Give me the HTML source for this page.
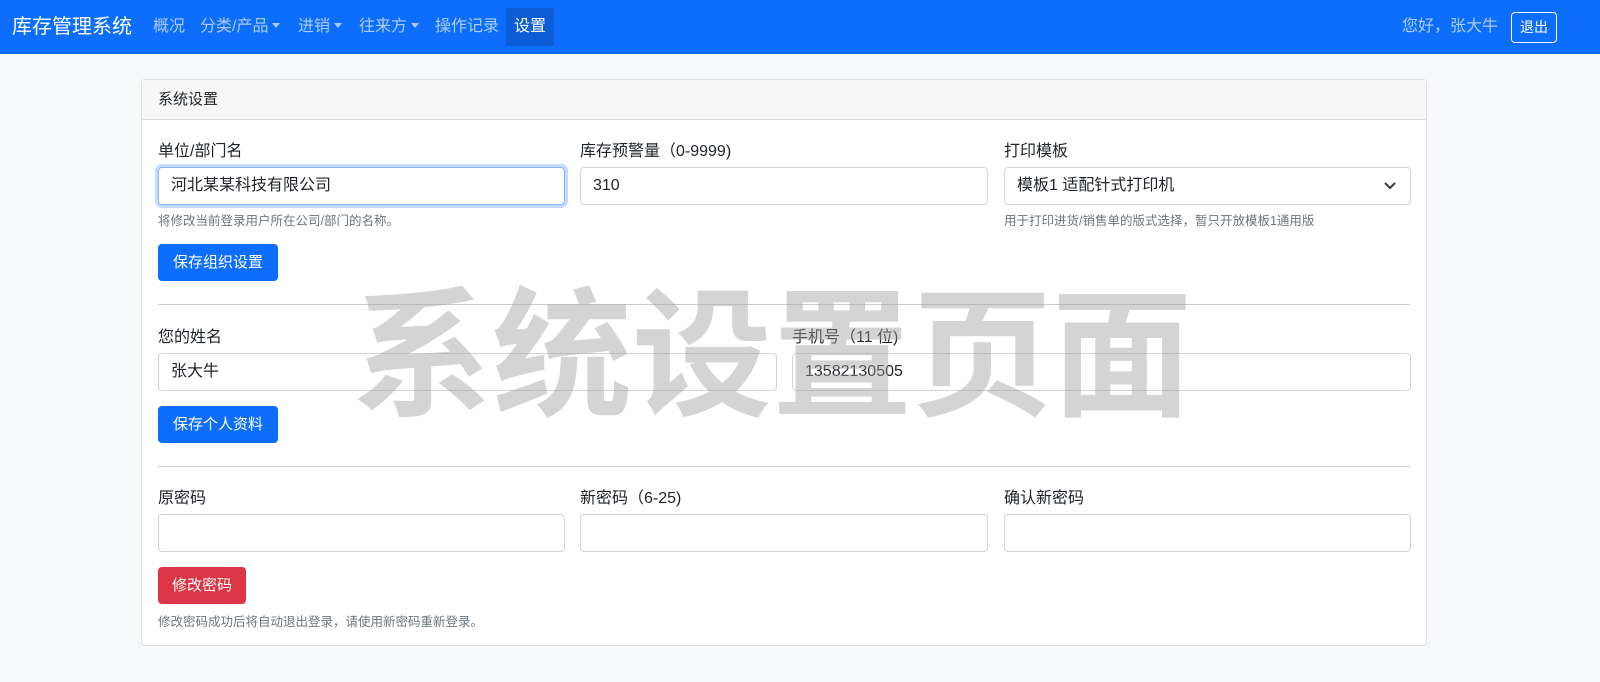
<!DOCTYPE html>
<html><head><meta charset="utf-8"><style>
*{box-sizing:border-box;margin:0;padding:0}
body{width:1600px;height:682px;background:#f8f9fa;font-family:"Liberation Sans","Noto Sans CJK SC",sans-serif;color:#212529;font-size:16px;position:relative;overflow:hidden}
.nav{height:54px;background:#0d6efd;position:relative}
.nav span{position:absolute;top:0;line-height:54px;color:rgba(255,255,255,.65);font-size:16px}
.brand{left:12px;color:#fff!important;font-size:20px!important}
.caret:after{content:"";display:inline-block;margin-left:4px;vertical-align:3px;border-top:5px solid;border-left:4px solid transparent;border-right:4px solid transparent}
.act{background:#0b5ed7;color:#fff!important;top:8px!important;height:38px;line-height:38px!important;padding:0 8px}
.out{position:absolute;left:1511px;top:12px;width:46px;height:31px;border:1px solid #fff;border-radius:4px;color:#fff;font-size:14px;line-height:29px;text-align:center}
.card{position:absolute;left:141px;top:79px;width:1286px;height:567px;border:1px solid #dfdfdf;border-radius:4px;background:#fff}
.hd{height:40px;background:#f7f7f7;border-bottom:1px solid #dfdfdf;padding-left:16px;line-height:40px;font-size:15px}
.a{position:absolute}
.lbl{font-size:16px}
.inp{height:38px;border:1px solid #ced4da;border-radius:4px;background:#fff;padding-left:12px;line-height:36px;font-size:16px}
.help{font-size:12.5px;color:#6c757d}
.btn{height:37px;border-radius:4px;background:#0d6efd;color:#fff;font-size:15px;line-height:37px;text-align:center}
.hr{height:1px;background:#ccc;left:16px;width:1252px}
.wm{position:absolute;left:352px;top:272px;font-size:140px;font-weight:bold;color:rgba(160,160,160,.45);letter-spacing:0;white-space:nowrap;line-height:170px}
</style></head><body>
<div class="nav">
<span class="brand">库存管理系统</span>
<span style="left:153px">概况</span>
<span style="left:200px" class="caret">分类/产品</span>
<span style="left:298px" class="caret">进销</span>
<span style="left:359px" class="caret">往来方</span>
<span style="left:435px">操作记录</span>
<span style="left:506px" class="act">设置</span>
<span style="left:1402px">您好，张大牛</span>
<div class="out">退出</div>
</div>
<div class="card">
<div class="hd">系统设置</div>
<div class="a lbl" style="left:16px;top:57px">单位/部门名</div>
<div class="a lbl" style="left:438px;top:57px">库存预警量（0-9999)</div>
<div class="a lbl" style="left:862px;top:57px">打印模板</div>
<div class="a inp" style="left:16px;top:87px;width:407px;border-color:#86b7fe;box-shadow:0 0 0 3px rgba(13,110,253,.25)">河北某某科技有限公司</div>
<div class="a inp" style="left:438px;top:87px;width:408px">310</div>
<div class="a inp" style="left:862px;top:87px;width:407px">模板1 适配针式打印机<svg style="position:absolute;right:14px;top:13px" width="12" height="10" viewBox="0 0 12 10"><path d="M1 2l5 5 5-5" fill="none" stroke="#343a40" stroke-width="2"/></svg></div>
<div class="a help" style="left:16px;top:130px">将修改当前登录用户所在公司/部门的名称。</div>
<div class="a help" style="left:862px;top:130px">用于打印进货/销售单的版式选择，暂只开放模板1通用版</div>
<div class="a btn" style="left:16px;top:164px;width:120px">保存组织设置</div>
<div class="a hr" style="top:224px"></div>
<div class="a lbl" style="left:16px;top:243px">您的姓名</div>
<div class="a lbl" style="left:650px;top:243px">手机号（11 位)</div>
<div class="a inp" style="left:16px;top:273px;width:619px">张大牛</div>
<div class="a inp" style="left:650px;top:273px;width:619px">13582130505</div>
<div class="a btn" style="left:16px;top:326px;width:120px">保存个人资料</div>
<div class="a hr" style="top:386px"></div>
<div class="a lbl" style="left:16px;top:404px">原密码</div>
<div class="a lbl" style="left:438px;top:404px">新密码（6-25)</div>
<div class="a lbl" style="left:862px;top:404px">确认新密码</div>
<div class="a inp" style="left:16px;top:434px;width:407px"></div>
<div class="a inp" style="left:438px;top:434px;width:408px"></div>
<div class="a inp" style="left:862px;top:434px;width:407px"></div>
<div class="a btn" style="left:16px;top:487px;width:88px;background:#dc3545">修改密码</div>
<div class="a help" style="left:16px;top:531px">修改密码成功后将自动退出登录，请使用新密码重新登录。</div>
</div>
<div class="wm">系统设置页面</div>
</body></html>
